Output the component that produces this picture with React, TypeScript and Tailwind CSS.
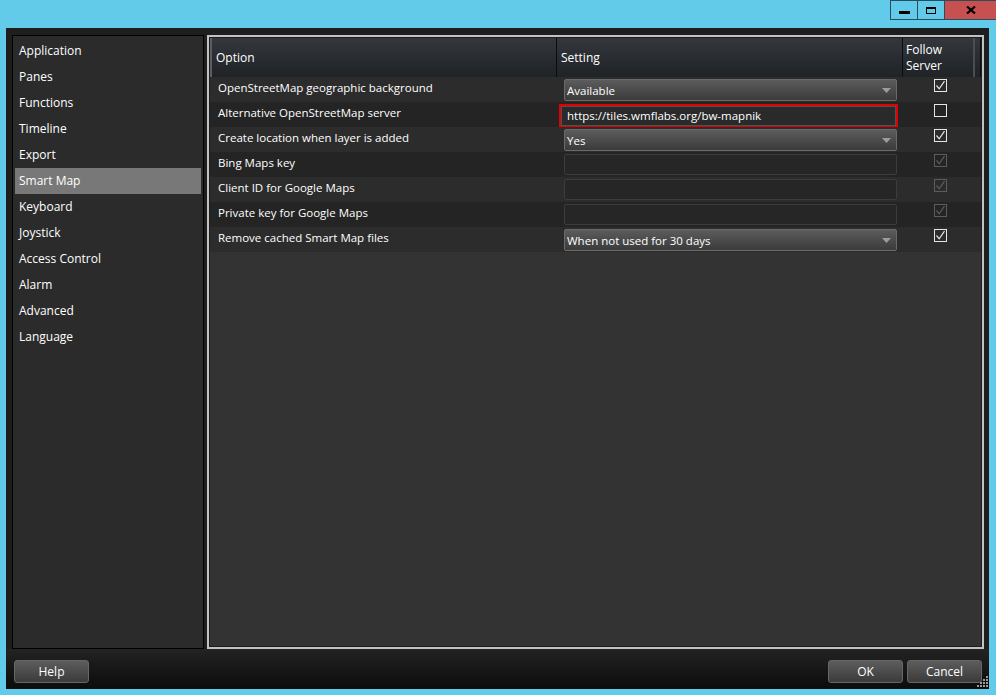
import React from "react";

const font = { fontFamily: '"Open Sans", "Liberation Sans", sans-serif' };

const navItems = [
  "Application",
  "Panes",
  "Functions",
  "Timeline",
  "Export",
  "Smart Map",
  "Keyboard",
  "Joystick",
  "Access Control",
  "Alarm",
  "Advanced",
  "Language",
];

type Row = {
  label: string;
  kind: "select" | "input" | "empty";
  value?: string;
  checked: boolean;
  disabled?: boolean;
};

const rows: Row[] = [
  { label: "OpenStreetMap geographic background", kind: "select", value: "Available", checked: true },
  { label: "Alternative OpenStreetMap server", kind: "input", value: "https://tiles.wmflabs.org/bw-mapnik", checked: false },
  { label: "Create location when layer is added", kind: "select", value: "Yes", checked: true },
  { label: "Bing Maps key", kind: "empty", checked: true, disabled: true },
  { label: "Client ID for Google Maps", kind: "empty", checked: true, disabled: true },
  { label: "Private key for Google Maps", kind: "empty", checked: true, disabled: true },
  { label: "Remove cached Smart Map files", kind: "select", value: "When not used for 30 days", checked: true },
];

function Checkbox({ checked, disabled }: { checked: boolean; disabled?: boolean }) {
  const c = disabled ? "#5c5c5c" : "#e6e6e6";
  return (
    <div
      className="w-[13px] h-[13px] border flex items-center justify-center"
      style={{ borderColor: c }}
    >
      {checked && (
        <svg width="11" height="11" viewBox="0 0 11 11">
          <path d="M1.5 5.5 L4.2 8.8 L9.5 1.2" fill="none" stroke={c} strokeWidth="1.2" />
        </svg>
      )}
    </div>
  );
}

function Select({ value }: { value: string }) {
  return (
    <div className="w-[333px] h-[22px] rounded-[2px] border border-[#6a6a6a] bg-gradient-to-b from-[#5c5c5c] to-[#3b3b3b] flex items-center justify-between pl-[2px] pr-[5px] pt-[1px] text-white text-[11.5px]">
      <span>{value}</span>
      <svg width="9" height="5" viewBox="0 0 9 5">
        <path d="M0 0 H9 L4.5 5 Z" fill="#9c9c9c" />
      </svg>
    </div>
  );
}

function Btn({ label }: { label: string }) {
  return (
    <button className="w-[75px] h-[23px] rounded-[3px] border border-[#666] bg-gradient-to-b from-[#5d5d5d] to-[#3b3b3b] text-white text-[12px] flex items-center justify-center">
      {label}
    </button>
  );
}

export default function App() {
  return (
    <div className="w-[996px] h-[695px] bg-[#63cbea] flex flex-col overflow-hidden" style={font}>
      <div className="h-[28px] flex justify-end items-start shrink-0">
        <div className="flex h-[20px]">
          <div className="w-[28px] h-[20px] border border-[#2a4d5e] flex items-end justify-center pb-[5px]">
            <div className="w-[11px] h-[3px] bg-black" />
          </div>
          <div className="w-[27px] h-[20px] border-y border-r border-[#2a4d5e] flex items-center justify-center">
            <div className="w-[10px] h-[7px] border border-black border-t-[2px]" />
          </div>
          <div className="w-[51px] h-[20px] bg-[#c75050] border-y border-[#2a4d5e] flex items-center justify-center">
            <svg width="10" height="8" viewBox="0 0 10 8">
              <path d="M1 0.5 L9 7.5 M9 0.5 L1 7.5" stroke="black" strokeWidth="2.2" />
            </svg>
          </div>
        </div>
      </div>

      <div className="ml-[6px] w-[983px] h-[661px] bg-[#1e1e1e] flex flex-col">
        <div className="flex-1 flex pt-[7px] pl-[6px] pr-[5px] gap-[3px] min-h-0">
          <div className="w-[192px] h-[614px] border border-black bg-[#2b2b2b] pt-[2px] px-[2px]">
            {navItems.map((item) => (
              <div
                key={item}
                className={`h-[26px] flex items-center pl-[4px] pb-[1px] text-white text-[12px] ${
                  item === "Smart Map" ? "bg-[#787878]" : ""
                }`}
              >
                {item}
              </div>
            ))}
          </div>

          <div className="w-[777px] h-[614px] border-2 border-[#c2c2c2] bg-[#1e1e1e] p-[1px] flex flex-col">
            <div className="flex-1 bg-[#333333] flex flex-col">
              <div className="h-[39px] flex bg-gradient-to-b from-[#34383d] to-[#1f2226] text-white text-[12px] shrink-0">
                <div className="w-[346px] flex items-center border-l-[2px] border-[#5a5d61] pl-[4px] pb-[1px] pt-[1px]">
                  Option
                </div>
                <div className="w-[346px] flex items-center border-l border-[#0c0c0c] pl-[4px] pb-[1px] pt-[1px]">
                  Setting
                </div>
                <div className="w-[71px] flex flex-col justify-center border-l border-[#0c0c0c] pl-[3px] leading-[16px]">
                  <span>Follow</span>
                  <span>Server</span>
                </div>
                <div className="flex-1 border-l-2 border-[#4a4d51] border-r border-r-[#0c0c0c]" />
              </div>

              {rows.map((r, i) => (
                <div
                  key={r.label}
                  className={`h-[25px] flex shrink-0 ${i % 2 === 0 ? "bg-[#2c2c2c]" : "bg-[#242424]"}`}
                >
                  <div className="w-[347px] flex items-center pl-[8px] pb-[3px] text-white text-[11.5px]">
                    {r.label}
                  </div>
                  <div className="w-[346px] pl-[7px] pt-[2px]">
                    {r.kind === "select" && <Select value={r.value!} />}
                    {r.kind === "input" && (
                      <div className="-ml-[5px] w-[339px] h-[24px] border-2 border-[#e30000]">
                        <div className="w-full h-full border border-[#505050] bg-[#2a2a2a] flex items-center pl-[5px] text-white text-[11.5px]">
                          {r.value}
                        </div>
                      </div>
                    )}
                    {r.kind === "empty" && (
                      <div className="w-[333px] h-[21px] rounded-[2px] border border-[#3c3c3c] bg-[#262626]" />
                    )}
                  </div>
                  <div className="w-[71px] flex justify-center pt-[2px] pl-[3px]">
                    <Checkbox checked={r.checked} disabled={r.disabled} />
                  </div>
                </div>
              ))}
            </div>
          </div>
        </div>

        <div className="h-[40px] shrink-0 bg-gradient-to-b from-[#232323] to-[#0c0c0c] flex items-start justify-between pt-[11px] pl-[8px] pr-[7px] relative">
          <Btn label="Help" />
          <div className="flex gap-[4px]">
            <Btn label="OK" />
            <Btn label="Cancel" />
          </div>
          <svg className="absolute right-[1px] bottom-[2px]" width="11" height="11" viewBox="0 0 11 11">
            {[
              [9, 0], [9, 3], [6, 3], [9, 6], [6, 6], [3, 6], [9, 9], [6, 9], [3, 9], [0, 9],
            ].map(([x, y]) => (
              <rect key={`${x}-${y}`} x={x} y={y} width="2" height="2" fill="#9a9a9a" />
            ))}
          </svg>
        </div>
      </div>
    </div>
  );
}
